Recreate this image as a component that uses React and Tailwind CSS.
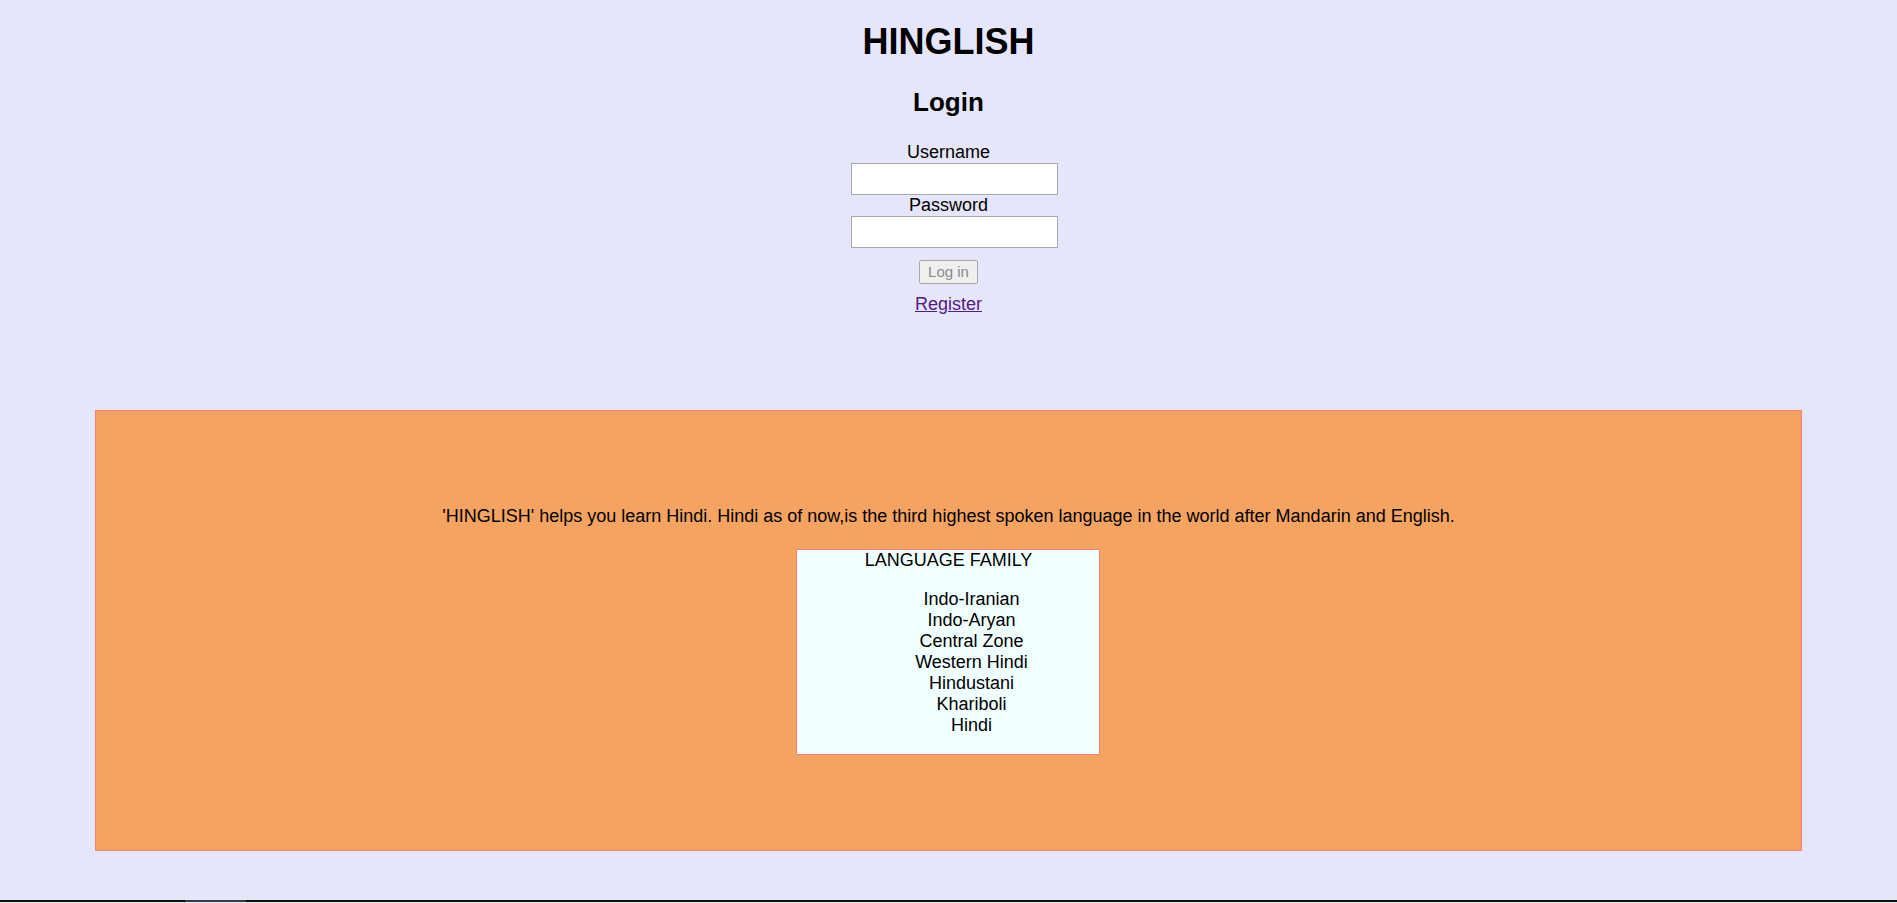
const family = [
  "Indo-Iranian",
  "Indo-Aryan",
  "Central Zone",
  "Western Hindi",
  "Hindustani",
  "Khariboli",
  "Hindi",
];

export default function App() {
  return (
    <div className="min-h-[903px] bg-[#E6E6FA] text-black text-[18px] font-['Liberation_Sans',Arial,sans-serif]">
      <div className="flex flex-col items-center text-center">
        <h1 className="mt-[21px] text-[36px] leading-[41px] font-bold">HINGLISH</h1>
        <h2 className="mt-[25px] text-[26px] leading-[30px] font-bold">Login</h2>

        <form className="mt-[25px] flex flex-col items-center" onSubmit={(e) => e.preventDefault()}>
          <label htmlFor="username" className="leading-[21px]">Username</label>
          <input id="username" type="text" className="ml-[11px] w-[207px] h-[32px] bg-white border border-[#a9a9a9]" />
          <label htmlFor="password" className="leading-[21px]">Password</label>
          <input id="password" type="password" className="ml-[11px] w-[207px] h-[32px] bg-white border border-[#a9a9a9]" />
          <button
            type="submit"
            disabled
            className="mt-[12px] w-[59px] h-[24px] text-[15px] leading-[22px] text-[#8a8a8a] bg-[#efefef] border border-[#a9a9a9] rounded-[2px]"
          >
            Log in
          </button>
          <a href="#" className="mt-[10px] leading-[21px] text-[#551A8B] underline">Register</a>
        </form>
      </div>

      <div className="mt-[95px] w-[90%] mx-auto bg-[#F4A460] border border-[#FA8072] pt-[95px] pb-[95px] flex flex-col items-center">
        <p className="leading-[21px] text-center">
          'HINGLISH' helps you learn Hindi. Hindi as of now,is the third highest spoken language in the world after Mandarin and English.
        </p>
        <div className="mt-[22px] w-[304px] h-[206px] bg-[#F0FFFF] border border-[#FA8072] text-center">
          <p className="leading-[21px]">LANGUAGE FAMILY</p>
          <ul className="mt-[18px] pl-[46px] leading-[21px]">
            {family.map((item) => (
              <li key={item}>{item}</li>
            ))}
          </ul>
        </div>
      </div>

      <div className="mt-[49px] h-[2px] bg-[#0d0d08] flex">
        <div className="ml-[185px] w-[61px] bg-[#3c3c3c]" />
      </div>
    </div>
  );
}
